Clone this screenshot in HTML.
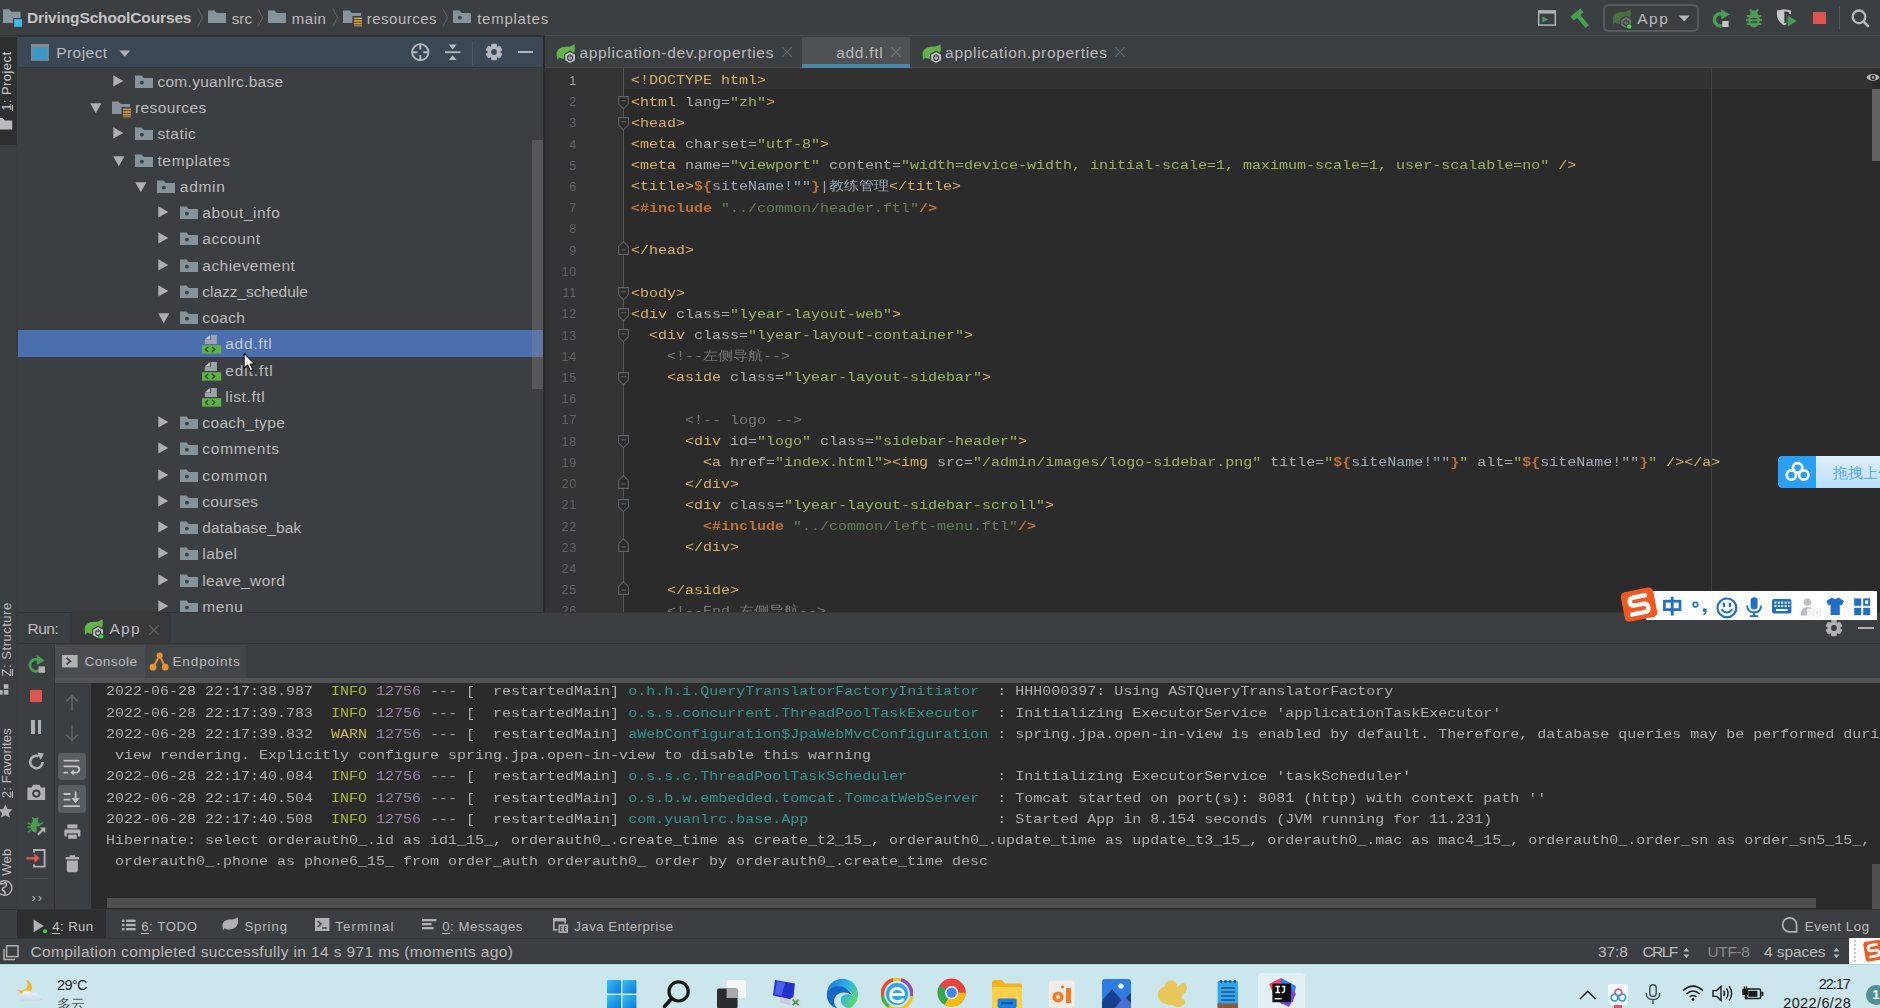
<!DOCTYPE html>
<html><head><meta charset="utf-8"><title>IDE</title>
<style>
html,body{margin:0;padding:0;}
body{width:1880px;height:1008px;overflow:hidden;position:relative;background:#3c3f41;font-family:"Liberation Sans",sans-serif;color:#bbbbbb;}
body div,body svg,body span.t{position:absolute;}
span.t{white-space:pre;}
.cl{left:631.3px;opacity:.9;height:21px;white-space:pre;font-family:"Liberation Mono",monospace;font-size:13px;line-height:21px;color:#a9b7c6;transform:scaleX(1.1538);transform-origin:0 0;}
.co{left:105.8px;opacity:.9;height:21px;white-space:pre;font-family:"Liberation Mono",monospace;font-size:13px;line-height:21px;color:#bbbbbb;transform:scaleX(1.1538);transform-origin:0 0;}
.ln{left:544.2px;width:33px;text-align:right;font-size:12.5px;line-height:14px;height:14px;color:#606366;letter-spacing:0.9px;}
.g{color:#e8bf6a}.a{color:#bababa}.v{color:#a5c261}.c{color:#808080}.k{color:#cc7832;font-weight:bold}.o{color:#cc7832;font-weight:bold}.s{color:#6a8759}.p{color:#a9b7c6}
.i{color:#b6c535}.w{color:#d8c548}.m{color:#a38bb4}.l{color:#2fa19c}
</style></head>
<body>
<div style="left:0px;top:0px;width:1880px;height:36px;background:#3c3f41;"></div>
<div style="left:0px;top:35px;width:545px;height:1.6px;background:#2f3234;"></div>
<div style="left:545px;top:35.4px;width:1335px;height:1.3px;background:#494b4d;"></div>
<svg style="left:3.2px;top:9px;" width="20" height="19" viewBox="0 0 20 19"><path d="M0,0.3 H6.2 L8.2,2.7 H17.5 V14 H0 Z" fill="#8a969d"/><rect x="10.1" y="9" width="10" height="10" fill="#3c3f41"/><rect x="11.2" y="10.1" width="7.9" height="7.7" fill="#3dbae6"/></svg>
<span class="t" style="left:27px;top:10.08px;font-size:15.5px;line-height:15.5px;letter-spacing:-0.137px;font-weight:700;color:#c4c4c4;">DrivingSchoolCourses</span>
<svg style="left:196.5px;top:8px;" width="7" height="19" viewBox="0 0 7 19"><path d="M0.8,0.5 L5.6,9.5 L0.8,18.5" stroke="#5c6062" stroke-width="1.1" fill="none"/></svg>
<svg style="left:207.7px;top:9.8px;" width="20" height="17" viewBox="0 0 20 17"><path d="M0,0.6 H6.6 L8.6,3 H18 V13 H0 Z" fill="#87939a"/></svg>
<span class="t" style="left:231.7px;top:10.50px;font-size:15px;line-height:15px;letter-spacing:0.100px;">src</span>
<svg style="left:256.5px;top:8px;" width="7" height="19" viewBox="0 0 7 19"><path d="M0.8,0.5 L5.6,9.5 L0.8,18.5" stroke="#5c6062" stroke-width="1.1" fill="none"/></svg>
<svg style="left:267.9px;top:9.8px;" width="20" height="17" viewBox="0 0 20 17"><path d="M0,0.6 H6.6 L8.6,3 H18 V13 H0 Z" fill="#87939a"/></svg>
<span class="t" style="left:291.7px;top:10.50px;font-size:15px;line-height:15px;letter-spacing:0.561px;">main</span>
<svg style="left:331.8px;top:8px;" width="7" height="19" viewBox="0 0 7 19"><path d="M0.8,0.5 L5.6,9.5 L0.8,18.5" stroke="#5c6062" stroke-width="1.1" fill="none"/></svg>
<svg style="left:342.8px;top:9.8px;" width="20" height="17" viewBox="0 0 20 17"><path d="M0,0.6 H6.6 L8.6,3 H18 V13 H0 Z" fill="#87939a"/><rect x="9.5" y="6" width="9.5" height="10" fill="#3c3f41"/><rect x="11" y="7.6" width="8" height="1.6" fill="#d9a343"/><rect x="11" y="10.2" width="8" height="1.6" fill="#d9a343"/><rect x="11" y="12.8" width="8" height="1.6" fill="#d9a343"/><rect x="11" y="15.2" width="8" height="1.2" fill="#b8893a"/></svg>
<span class="t" style="left:366.8px;top:10.50px;font-size:15px;line-height:15px;letter-spacing:0.493px;">resources</span>
<svg style="left:441.8px;top:8px;" width="7" height="19" viewBox="0 0 7 19"><path d="M0.8,0.5 L5.6,9.5 L0.8,18.5" stroke="#5c6062" stroke-width="1.1" fill="none"/></svg>
<svg style="left:453px;top:9.8px;" width="20" height="17" viewBox="0 0 20 17"><path d="M0,0.6 H6.6 L8.6,3 H18 V13 H0 Z" fill="#87939a"/><circle cx="6.9" cy="7.6" r="1.9" fill="#3c3f41"/></svg>
<span class="t" style="left:477.2px;top:10.50px;font-size:15px;line-height:15px;letter-spacing:0.744px;">templates</span>
<svg style="left:1537px;top:10px;" width="20" height="17" viewBox="0 0 20 17"><rect x="1.7" y="1.1" width="16.6" height="14" fill="none" stroke="#afb1b3" stroke-width="1.5"/><rect x="1" y="0.4" width="18" height="3.2" fill="#afb1b3"/><path d="M5.2,6.4 L11.2,9.6 L5.2,12.8 Z" fill="#499c54"/></svg>
<svg style="left:1567.8px;top:6.6px;" width="23" height="22" viewBox="0 0 23 22"><g transform="translate(11.4,10.2) rotate(-40)" fill="#499c54"><rect x="-6.4" y="-6.2" width="12.8" height="5.2" rx="0.5"/><rect x="-2.2" y="-2" width="4.4" height="14.2"/></g></svg>
<div style="left:1603.4px;top:3.6px;width:92px;height:24px;border:2px solid #57595b;border-radius:5.5px;box-sizing:content-box"></div>
<svg style="left:1611.8px;top:8.6px;" width="21.0" height="21.0" viewBox="0 0 21 21"><g opacity="0.4"><path d="M0.9,12.6 C-0.8,6.6 4,2.4 10.4,2.8 C13.8,3 16.4,1.9 18.3,0 C19.5,5.4 18.7,10.2 15.2,12.9 C11.6,15.6 6,15.4 3.2,13.6 L1.3,15.9 Z" fill="#62b34a"/><path d="M14.1,6.6 L20.1,10.1 V17 L14.1,20.4 L8.1,17 V10.1 Z" fill="#3c3f41"/><path d="M14.1,7.9 L19,10.7 V16.3 L14.1,19.1 L9.2,16.3 V10.7 Z" fill="#c0c2c4"/><circle cx="14.1" cy="13.8" r="2.5" fill="none" stroke="#3c3f41" stroke-width="1.2"/><rect x="13.1" y="9.6" width="2" height="3" fill="#c0c2c4"/><rect x="13.55" y="10" width="1.1" height="3.4" fill="#3c3f41"/></g><circle cx="17.2" cy="17.4" r="2.9" fill="#3c3f41"/><circle cx="17.2" cy="17.4" r="2.2" fill="#2fe02f"/></svg>
<span class="t" style="left:1637.2px;top:11.08px;font-size:15.5px;line-height:15.5px;letter-spacing:1.503px;">App</span>
<svg style="left:1678px;top:15px;" width="13" height="8" viewBox="0 0 13 8"><path d="M0.6,0.6 H11.6 L6.1,6.6 Z" fill="#b4b6b8"/></svg>
<svg style="left:1711px;top:8px;" width="22" height="21" viewBox="0 0 22 21"><path d="M13,6.8 A6.1,6.1 0 1 0 13.6,16.4" stroke="#499c54" stroke-width="3.6" fill="none"/><path d="M10.2,1.2 L18.8,6.6 L10.2,11.6 Z" fill="#499c54"/><rect x="10.6" y="12.4" width="7.6" height="7.4" fill="#3c3f41"/><rect x="11.3" y="13" width="6.3" height="6" fill="#c4c6c8"/></svg>
<svg style="left:1744px;top:8px;" width="20" height="20" viewBox="0 0 20 20"><g stroke="#499c54" stroke-width="2.1" fill="none"><path d="M2.6,8 H17.4 M2,12 H18 M2.6,16 H17.4 M6,1.4 L8.6,4.6 M14,1.4 L11.4,4.6"/></g><g fill="#499c54"><ellipse cx="10" cy="12" rx="5.7" ry="7.4"/><circle cx="10" cy="6" r="3.8"/></g><g stroke="#3c3f41" stroke-width="1.3"><path d="M7,10.6 H13 M7,14 H13"/></g></svg>
<svg style="left:1776px;top:9px;" width="22" height="20" viewBox="0 0 22 20"><path d="M1,1.6 L8,0.2 L15,1.6 V5 H10.6 V15 L8,16.4 C3.6,13.6 1,10 1,5.8 Z" fill="#c4c6c8"/><path d="M8.4,2.2 L13.2,3.2 V5 H10.6 V13.6 L8.4,14.2 Z" fill="#34373a"/><path d="M11.8,6.6 L20.8,12 L11.8,17.6 Z" fill="#499c54"/></svg>
<div style="left:1813px;top:12px;width:12.6px;height:12.2px;background:#db5651;"></div>
<div style="left:1839px;top:6px;width:1px;height:23px;background:#55585a;"></div>
<svg style="left:1850px;top:9px;" width="21" height="20" viewBox="0 0 21 20"><circle cx="9" cy="7.8" r="6.3" fill="none" stroke="#b4b6b8" stroke-width="2.3"/><path d="M13.4,12.4 L18,17" stroke="#b4b6b8" stroke-width="2.6" stroke-linecap="round"/></svg>
<div style="left:0px;top:36px;width:18px;height:902px;background:#3c3f41;"></div>
<div style="left:15.8px;top:145px;width:3px;height:793px;background:#393c3e;"></div>
<div style="left:0px;top:36.5px;width:16.8px;height:108.5px;background:#2d2f30;"></div>
<span class="t" style="left:0px;top:-0.00px;font-size:13px;line-height:13px;letter-spacing:0.431px;color:#c8c8c8;transform-origin:0 0;transform:translate(0.3px,110.8px) rotate(-90deg);">1: Project</span>
<div style="left:12.3px;top:104.6px;width:1.1px;height:6.6px;background:#c8c8c8;"></div>
<svg style="left:0px;top:117px;" width="13" height="13" viewBox="0 0 13 13"><path d="M-6,1 H2.6 L4.8,3.6 H12.2 V12.6 H-6 Z" fill="#b9bcbe"/></svg>
<div style="left:18px;top:36.6px;width:525.7px;height:30.4px;background:#3b4754;"></div>
<div style="left:18px;top:67px;width:525px;height:1px;background:#35393d;"></div>
<svg style="left:31px;top:44.2px;" width="19" height="17" viewBox="0 0 19 17"><rect x="0.7" y="0.7" width="16.5" height="15.4" fill="#3a98c8" stroke="#7f8b91" stroke-width="1.4"/><rect x="0" y="0" width="17.9" height="3.4" fill="#7f8b91"/></svg>
<span class="t" style="left:56.2px;top:45.28px;font-size:15.5px;line-height:15.5px;letter-spacing:0.458px;">Project</span>
<svg style="left:118.5px;top:49.5px;" width="12" height="8" viewBox="0 0 12 8"><path d="M0.4,0.4 H11.2 L5.8,6.8 Z" fill="#afb1b3"/></svg>
<svg style="left:410px;top:42px;" width="21" height="21" viewBox="0 0 21 21"><circle cx="10.3" cy="10.2" r="8.1" fill="none" stroke="#b2b7bc" stroke-width="1.9"/><path d="M10.3,1.5 V7.4 M10.3,13 V19 M1.5,10.2 H7.4 M13.2,10.2 H19" stroke="#b2b7bc" stroke-width="2"/></svg>
<svg style="left:443.5px;top:43px;" width="18" height="19" viewBox="0 0 18 19"><path d="M1,9.2 H16.4" stroke="#b2b7bc" stroke-width="1.9"/><path d="M4.8,1.6 H12.6 L8.7,6.4 Z M4.8,17 H12.6 L8.7,12.2 Z" fill="#b2b7bc"/></svg>
<div style="left:472px;top:41px;width:1px;height:24px;background:#4a5866;"></div>
<svg style="left:483.6px;top:42px;" width="20" height="20" viewBox="0 0 20 20"><g transform="translate(10,10)"><path d="M-2.5,-8.3 H2.5 L3.1,-4.700000000000001 H-3.1 Z" transform="rotate(0)" fill="#b2b7bc"/><path d="M-2.5,-8.3 H2.5 L3.1,-4.700000000000001 H-3.1 Z" transform="rotate(60)" fill="#b2b7bc"/><path d="M-2.5,-8.3 H2.5 L3.1,-4.700000000000001 H-3.1 Z" transform="rotate(120)" fill="#b2b7bc"/><path d="M-2.5,-8.3 H2.5 L3.1,-4.700000000000001 H-3.1 Z" transform="rotate(180)" fill="#b2b7bc"/><path d="M-2.5,-8.3 H2.5 L3.1,-4.700000000000001 H-3.1 Z" transform="rotate(240)" fill="#b2b7bc"/><path d="M-2.5,-8.3 H2.5 L3.1,-4.700000000000001 H-3.1 Z" transform="rotate(300)" fill="#b2b7bc"/><circle r="6.1000000000000005" fill="#b2b7bc"/><circle r="2.9" fill="#3b4754"/></g></svg>
<div style="left:518.3px;top:51px;width:15.2px;height:2px;background:#b2b7bc;"></div>
<div style="left:543px;top:36px;width:2px;height:577px;background:#2b2b2b;"></div>
<div style="left:545px;top:36px;width:1335px;height:32px;background:#3c3f41;"></div>
<div style="left:545px;top:67px;width:1335px;height:1px;background:#4a4c4e;"></div>
<svg style="left:555.6px;top:44.3px;" width="21.0" height="21.0" viewBox="0 0 21 21"><g opacity="1"><path d="M0.9,12.6 C-0.8,6.6 4,2.4 10.4,2.8 C13.8,3 16.4,1.9 18.3,0 C19.5,5.4 18.7,10.2 15.2,12.9 C11.6,15.6 6,15.4 3.2,13.6 L1.3,15.9 Z" fill="#62b34a"/><path d="M14.1,6.6 L20.1,10.1 V17 L14.1,20.4 L8.1,17 V10.1 Z" fill="#3c3f41"/><path d="M14.1,7.9 L19,10.7 V16.3 L14.1,19.1 L9.2,16.3 V10.7 Z" fill="#c0c2c4"/><circle cx="14.1" cy="13.8" r="2.5" fill="none" stroke="#3c3f41" stroke-width="1.2"/><rect x="13.1" y="9.6" width="2" height="3" fill="#c0c2c4"/><rect x="13.55" y="10" width="1.1" height="3.4" fill="#3c3f41"/></g></svg>
<span class="t" style="left:579.4px;top:44.58px;font-size:15.5px;line-height:15.5px;letter-spacing:0.706px;">application-dev.properties</span>
<svg style="left:780.8px;top:46.3px;" width="12" height="12" viewBox="0 0 12 12"><path d="M1.4000000000000004,1.4000000000000004 L10.6,10.6 M10.6,1.4000000000000004 L1.4000000000000004,10.6" stroke="#64686a" stroke-width="1.3" fill="none"/></svg>
<div style="left:802px;top:36.8px;width:108.2px;height:30.7px;background:#4e5254;"></div>
<div style="left:802px;top:64px;width:108.2px;height:4px;background:#4a88a5;"></div>
<span class="t" style="left:836.2px;top:44.58px;font-size:15.5px;line-height:15.5px;letter-spacing:0.694px;">add.ftl</span>
<svg style="left:889.7px;top:46.3px;" width="12" height="12" viewBox="0 0 12 12"><path d="M1.4000000000000004,1.4000000000000004 L10.6,10.6 M10.6,1.4000000000000004 L1.4000000000000004,10.6" stroke="#74787a" stroke-width="1.3" fill="none"/></svg>
<svg style="left:921.6px;top:44.3px;" width="21.0" height="21.0" viewBox="0 0 21 21"><g opacity="1"><path d="M0.9,12.6 C-0.8,6.6 4,2.4 10.4,2.8 C13.8,3 16.4,1.9 18.3,0 C19.5,5.4 18.7,10.2 15.2,12.9 C11.6,15.6 6,15.4 3.2,13.6 L1.3,15.9 Z" fill="#62b34a"/><path d="M14.1,6.6 L20.1,10.1 V17 L14.1,20.4 L8.1,17 V10.1 Z" fill="#3c3f41"/><path d="M14.1,7.9 L19,10.7 V16.3 L14.1,19.1 L9.2,16.3 V10.7 Z" fill="#c0c2c4"/><circle cx="14.1" cy="13.8" r="2.5" fill="none" stroke="#3c3f41" stroke-width="1.2"/><rect x="13.1" y="9.6" width="2" height="3" fill="#c0c2c4"/><rect x="13.55" y="10" width="1.1" height="3.4" fill="#3c3f41"/></g></svg>
<span class="t" style="left:945.1px;top:44.58px;font-size:15.5px;line-height:15.5px;letter-spacing:0.688px;">application.properties</span>
<svg style="left:1113.6px;top:46.3px;" width="12" height="12" viewBox="0 0 12 12"><path d="M1.4000000000000004,1.4000000000000004 L10.6,10.6 M10.6,1.4000000000000004 L1.4000000000000004,10.6" stroke="#64686a" stroke-width="1.3" fill="none"/></svg>
<div style="left:18px;top:68px;width:525px;height:544.5px;background:#3c3f41;"></div>
<div style="left:18px;top:330px;width:525px;height:27px;background:#4b6eaf;"></div>
<svg style="left:113.2px;top:75.10000000000001px;" width="11" height="12" viewBox="0 0 11 12"><path d="M0.3,0.2 L10.3,5.9 L0.3,11.6 Z" fill="#adafb1"/></svg>
<svg style="left:134.8px;top:74.9px;" width="20" height="17" viewBox="0 0 20 17"><path d="M0,0.6 H6.6 L8.6,3 H18 V13 H0 Z" fill="#87939a"/><circle cx="6.9" cy="7.6" r="1.9" fill="#3c3f41"/></svg>
<span class="t" style="left:157.4px;top:73.58px;font-size:15.5px;line-height:15.5px;letter-spacing:0.288px;">com.yuanlrc.base</span>
<svg style="left:90.35px;top:103.10000000000001px;" width="12" height="11" viewBox="0 0 12 11"><path d="M0.2,0.3 L11.4,0.3 L5.8,10.3 Z" fill="#adafb1"/></svg>
<svg style="left:112.35px;top:100.9px;" width="20" height="17" viewBox="0 0 20 17"><path d="M0,0.6 H6.6 L8.6,3 H18 V13 H0 Z" fill="#87939a"/><rect x="9.5" y="6" width="9.5" height="10" fill="#3c3f41"/><rect x="11" y="7.6" width="8" height="1.6" fill="#d9a343"/><rect x="11" y="10.2" width="8" height="1.6" fill="#d9a343"/><rect x="11" y="12.8" width="8" height="1.6" fill="#d9a343"/><rect x="11" y="15.2" width="8" height="1.2" fill="#b8893a"/></svg>
<span class="t" style="left:134.95px;top:99.58px;font-size:15.5px;line-height:15.5px;letter-spacing:0.398px;">resources</span>
<svg style="left:113.2px;top:127.1px;" width="11" height="12" viewBox="0 0 11 12"><path d="M0.3,0.2 L10.3,5.9 L0.3,11.6 Z" fill="#adafb1"/></svg>
<svg style="left:134.8px;top:126.89999999999999px;" width="20" height="17" viewBox="0 0 20 17"><path d="M0,0.6 H6.6 L8.6,3 H18 V13 H0 Z" fill="#87939a"/><circle cx="6.9" cy="7.6" r="1.9" fill="#3c3f41"/></svg>
<span class="t" style="left:157.4px;top:125.58px;font-size:15.5px;line-height:15.5px;letter-spacing:0.443px;">static</span>
<svg style="left:112.8px;top:156.1px;" width="12" height="11" viewBox="0 0 12 11"><path d="M0.2,0.3 L11.4,0.3 L5.8,10.3 Z" fill="#adafb1"/></svg>
<svg style="left:134.8px;top:153.89999999999998px;" width="20" height="17" viewBox="0 0 20 17"><path d="M0,0.6 H6.6 L8.6,3 H18 V13 H0 Z" fill="#87939a"/><circle cx="6.9" cy="7.6" r="1.9" fill="#3c3f41"/></svg>
<span class="t" style="left:157.4px;top:152.58px;font-size:15.5px;line-height:15.5px;letter-spacing:0.662px;">templates</span>
<svg style="left:135.25px;top:182.1px;" width="12" height="11" viewBox="0 0 12 11"><path d="M0.2,0.3 L11.4,0.3 L5.8,10.3 Z" fill="#adafb1"/></svg>
<svg style="left:157.25px;top:179.89999999999998px;" width="20" height="17" viewBox="0 0 20 17"><path d="M0,0.6 H6.6 L8.6,3 H18 V13 H0 Z" fill="#87939a"/><circle cx="6.9" cy="7.6" r="1.9" fill="#3c3f41"/></svg>
<span class="t" style="left:179.85px;top:178.58px;font-size:15.5px;line-height:15.5px;letter-spacing:0.683px;">admin</span>
<svg style="left:158.09999999999997px;top:206.1px;" width="11" height="12" viewBox="0 0 11 12"><path d="M0.3,0.2 L10.3,5.9 L0.3,11.6 Z" fill="#adafb1"/></svg>
<svg style="left:179.7px;top:205.89999999999998px;" width="20" height="17" viewBox="0 0 20 17"><path d="M0,0.6 H6.6 L8.6,3 H18 V13 H0 Z" fill="#87939a"/><circle cx="6.9" cy="7.6" r="1.9" fill="#3c3f41"/></svg>
<span class="t" style="left:202.29999999999998px;top:204.58px;font-size:15.5px;line-height:15.5px;letter-spacing:0.566px;">about_info</span>
<svg style="left:158.09999999999997px;top:232.1px;" width="11" height="12" viewBox="0 0 11 12"><path d="M0.3,0.2 L10.3,5.9 L0.3,11.6 Z" fill="#adafb1"/></svg>
<svg style="left:179.7px;top:231.89999999999998px;" width="20" height="17" viewBox="0 0 20 17"><path d="M0,0.6 H6.6 L8.6,3 H18 V13 H0 Z" fill="#87939a"/><circle cx="6.9" cy="7.6" r="1.9" fill="#3c3f41"/></svg>
<span class="t" style="left:202.29999999999998px;top:230.58px;font-size:15.5px;line-height:15.5px;letter-spacing:0.567px;">account</span>
<svg style="left:158.09999999999997px;top:259.09999999999997px;" width="11" height="12" viewBox="0 0 11 12"><path d="M0.3,0.2 L10.3,5.9 L0.3,11.6 Z" fill="#adafb1"/></svg>
<svg style="left:179.7px;top:258.9px;" width="20" height="17" viewBox="0 0 20 17"><path d="M0,0.6 H6.6 L8.6,3 H18 V13 H0 Z" fill="#87939a"/><circle cx="6.9" cy="7.6" r="1.9" fill="#3c3f41"/></svg>
<span class="t" style="left:202.29999999999998px;top:257.58px;font-size:15.5px;line-height:15.5px;letter-spacing:0.461px;">achievement</span>
<svg style="left:158.09999999999997px;top:285.09999999999997px;" width="11" height="12" viewBox="0 0 11 12"><path d="M0.3,0.2 L10.3,5.9 L0.3,11.6 Z" fill="#adafb1"/></svg>
<svg style="left:179.7px;top:284.9px;" width="20" height="17" viewBox="0 0 20 17"><path d="M0,0.6 H6.6 L8.6,3 H18 V13 H0 Z" fill="#87939a"/><circle cx="6.9" cy="7.6" r="1.9" fill="#3c3f41"/></svg>
<span class="t" style="left:202.29999999999998px;top:283.58px;font-size:15.5px;line-height:15.5px;letter-spacing:-0.037px;">clazz_schedule</span>
<svg style="left:157.7px;top:313.09999999999997px;" width="12" height="11" viewBox="0 0 12 11"><path d="M0.2,0.3 L11.4,0.3 L5.8,10.3 Z" fill="#adafb1"/></svg>
<svg style="left:179.7px;top:310.9px;" width="20" height="17" viewBox="0 0 20 17"><path d="M0,0.6 H6.6 L8.6,3 H18 V13 H0 Z" fill="#87939a"/><circle cx="6.9" cy="7.6" r="1.9" fill="#3c3f41"/></svg>
<span class="t" style="left:202.29999999999998px;top:309.58px;font-size:15.5px;line-height:15.5px;letter-spacing:0.331px;">coach</span>
<svg style="left:202.1px;top:334.7px;" width="20" height="19" viewBox="0 0 20 19"><path d="M8.9,0 H14.9 V8.9 H2.8 V5.1 H8.9 Z" fill="#9aa4aa"/><path d="M7.9,0 V4.5 H2.8 Z" fill="#c3c9cd"/><rect x="0" y="10.2" width="19.2" height="8.4" fill="#62b147"/><path d="M6.3,11.8 L3.4,14.4 L6.3,17 M9.8,11.8 L12.7,14.4 L9.8,17" stroke="#27561f" stroke-width="1.4" fill="none"/></svg>
<span class="t" style="left:225.25px;top:335.58px;font-size:15.5px;line-height:15.5px;letter-spacing:0.719px;color:#c3c9d6;">add.ftl</span>
<svg style="left:202.1px;top:361.7px;" width="20" height="19" viewBox="0 0 20 19"><path d="M8.9,0 H14.9 V8.9 H2.8 V5.1 H8.9 Z" fill="#9aa4aa"/><path d="M7.9,0 V4.5 H2.8 Z" fill="#c3c9cd"/><rect x="0" y="10.2" width="19.2" height="8.4" fill="#62b147"/><path d="M6.3,11.8 L3.4,14.4 L6.3,17 M9.8,11.8 L12.7,14.4 L9.8,17" stroke="#27561f" stroke-width="1.4" fill="none"/></svg>
<span class="t" style="left:225.25px;top:362.58px;font-size:15.5px;line-height:15.5px;letter-spacing:0.884px;">edit.ftl</span>
<svg style="left:202.1px;top:387.7px;" width="20" height="19" viewBox="0 0 20 19"><path d="M8.9,0 H14.9 V8.9 H2.8 V5.1 H8.9 Z" fill="#9aa4aa"/><path d="M7.9,0 V4.5 H2.8 Z" fill="#c3c9cd"/><rect x="0" y="10.2" width="19.2" height="8.4" fill="#62b147"/><path d="M6.3,11.8 L3.4,14.4 L6.3,17 M9.8,11.8 L12.7,14.4 L9.8,17" stroke="#27561f" stroke-width="1.4" fill="none"/></svg>
<span class="t" style="left:225.25px;top:388.58px;font-size:15.5px;line-height:15.5px;letter-spacing:0.577px;">list.ftl</span>
<svg style="left:158.09999999999997px;top:416.09999999999997px;" width="11" height="12" viewBox="0 0 11 12"><path d="M0.3,0.2 L10.3,5.9 L0.3,11.6 Z" fill="#adafb1"/></svg>
<svg style="left:179.7px;top:415.9px;" width="20" height="17" viewBox="0 0 20 17"><path d="M0,0.6 H6.6 L8.6,3 H18 V13 H0 Z" fill="#87939a"/><circle cx="6.9" cy="7.6" r="1.9" fill="#3c3f41"/></svg>
<span class="t" style="left:202.29999999999998px;top:414.58px;font-size:15.5px;line-height:15.5px;letter-spacing:0.358px;">coach_type</span>
<svg style="left:158.09999999999997px;top:442.09999999999997px;" width="11" height="12" viewBox="0 0 11 12"><path d="M0.3,0.2 L10.3,5.9 L0.3,11.6 Z" fill="#adafb1"/></svg>
<svg style="left:179.7px;top:441.9px;" width="20" height="17" viewBox="0 0 20 17"><path d="M0,0.6 H6.6 L8.6,3 H18 V13 H0 Z" fill="#87939a"/><circle cx="6.9" cy="7.6" r="1.9" fill="#3c3f41"/></svg>
<span class="t" style="left:202.29999999999998px;top:440.58px;font-size:15.5px;line-height:15.5px;letter-spacing:0.743px;">comments</span>
<svg style="left:158.09999999999997px;top:469.09999999999997px;" width="11" height="12" viewBox="0 0 11 12"><path d="M0.3,0.2 L10.3,5.9 L0.3,11.6 Z" fill="#adafb1"/></svg>
<svg style="left:179.7px;top:468.9px;" width="20" height="17" viewBox="0 0 20 17"><path d="M0,0.6 H6.6 L8.6,3 H18 V13 H0 Z" fill="#87939a"/><circle cx="6.9" cy="7.6" r="1.9" fill="#3c3f41"/></svg>
<span class="t" style="left:202.29999999999998px;top:467.58px;font-size:15.5px;line-height:15.5px;letter-spacing:1.053px;">common</span>
<svg style="left:158.09999999999997px;top:495.09999999999997px;" width="11" height="12" viewBox="0 0 11 12"><path d="M0.3,0.2 L10.3,5.9 L0.3,11.6 Z" fill="#adafb1"/></svg>
<svg style="left:179.7px;top:494.9px;" width="20" height="17" viewBox="0 0 20 17"><path d="M0,0.6 H6.6 L8.6,3 H18 V13 H0 Z" fill="#87939a"/><circle cx="6.9" cy="7.6" r="1.9" fill="#3c3f41"/></svg>
<span class="t" style="left:202.29999999999998px;top:493.58px;font-size:15.5px;line-height:15.5px;letter-spacing:0.236px;">courses</span>
<svg style="left:158.09999999999997px;top:521.1px;" width="11" height="12" viewBox="0 0 11 12"><path d="M0.3,0.2 L10.3,5.9 L0.3,11.6 Z" fill="#adafb1"/></svg>
<svg style="left:179.7px;top:520.9000000000001px;" width="20" height="17" viewBox="0 0 20 17"><path d="M0,0.6 H6.6 L8.6,3 H18 V13 H0 Z" fill="#87939a"/><circle cx="6.9" cy="7.6" r="1.9" fill="#3c3f41"/></svg>
<span class="t" style="left:202.29999999999998px;top:519.58px;font-size:15.5px;line-height:15.5px;letter-spacing:0.137px;">database_bak</span>
<svg style="left:158.09999999999997px;top:547.1px;" width="11" height="12" viewBox="0 0 11 12"><path d="M0.3,0.2 L10.3,5.9 L0.3,11.6 Z" fill="#adafb1"/></svg>
<svg style="left:179.7px;top:546.9000000000001px;" width="20" height="17" viewBox="0 0 20 17"><path d="M0,0.6 H6.6 L8.6,3 H18 V13 H0 Z" fill="#87939a"/><circle cx="6.9" cy="7.6" r="1.9" fill="#3c3f41"/></svg>
<span class="t" style="left:202.29999999999998px;top:545.58px;font-size:15.5px;line-height:15.5px;letter-spacing:0.488px;">label</span>
<svg style="left:158.09999999999997px;top:574.1px;" width="11" height="12" viewBox="0 0 11 12"><path d="M0.3,0.2 L10.3,5.9 L0.3,11.6 Z" fill="#adafb1"/></svg>
<svg style="left:179.7px;top:573.9000000000001px;" width="20" height="17" viewBox="0 0 20 17"><path d="M0,0.6 H6.6 L8.6,3 H18 V13 H0 Z" fill="#87939a"/><circle cx="6.9" cy="7.6" r="1.9" fill="#3c3f41"/></svg>
<span class="t" style="left:202.29999999999998px;top:572.58px;font-size:15.5px;line-height:15.5px;letter-spacing:0.358px;">leave_word</span>
<svg style="left:158.09999999999997px;top:600.1px;" width="11" height="12" viewBox="0 0 11 12"><path d="M0.3,0.2 L10.3,5.9 L0.3,11.6 Z" fill="#adafb1"/></svg>
<svg style="left:179.7px;top:599.9000000000001px;" width="20" height="17" viewBox="0 0 20 17"><path d="M0,0.6 H6.6 L8.6,3 H18 V13 H0 Z" fill="#87939a"/><circle cx="6.9" cy="7.6" r="1.9" fill="#3c3f41"/></svg>
<span class="t" style="left:202.29999999999998px;top:598.58px;font-size:15.5px;line-height:15.5px;letter-spacing:0.640px;">menu</span>
<div style="left:532px;top:140px;width:10.6px;height:248.5px;background:rgba(140,140,140,0.32);"></div>
<div style="left:545px;top:68px;width:1335px;height:544.5px;background:#2b2b2b;"></div>
<div style="left:545px;top:68px;width:78.5px;height:544.5px;background:#313335;"></div>
<div style="left:623.5px;top:68px;width:1248px;height:21.2px;background:#323232;"></div>
<div style="left:1711px;top:68px;width:1px;height:544.5px;background:#3f4142;"></div>
<div style="left:623px;top:68px;width:1px;height:544.5px;background:#555759;"></div>
<div class="ln" style="top:73.90px;color:#a4a3a3">1</div>
<div class="cl" style="top:70.33px"><span class="g">&lt;!DOCTYPE html&gt;</span></div>
<div class="ln" style="top:95.12px">2</div>
<div class="cl" style="top:91.55px"><span class="g">&lt;html</span><span class="a"> la</span><span class="a">ng=</span><span class="v">"zh"</span><span class="g">&gt;</span></div>
<svg style="left:618px;top:95.72px;" width="11" height="14" viewBox="0 0 11 14"><path d="M0.6,0.6 H10.4 V7.8 L5.5,12.8 L0.6,7.8 Z" fill="#2b2b2b" stroke="#606366" stroke-width="1.1"/><path d="M3.2,4.8 H7.8" stroke="#606366" stroke-width="1.1"/></svg>
<div class="ln" style="top:116.34px">3</div>
<div class="cl" style="top:112.77px"><span class="g">&lt;head</span><span class="g">&gt;</span></div>
<svg style="left:618px;top:116.94px;" width="11" height="14" viewBox="0 0 11 14"><path d="M0.6,0.6 H10.4 V7.8 L5.5,12.8 L0.6,7.8 Z" fill="#2b2b2b" stroke="#606366" stroke-width="1.1"/><path d="M3.2,4.8 H7.8" stroke="#606366" stroke-width="1.1"/></svg>
<div class="ln" style="top:137.56px">4</div>
<div class="cl" style="top:133.99px"><span class="g">&lt;meta</span><span class="a"> ch</span><span class="a">arset=</span><span class="v">"utf-8"</span><span class="g">&gt;</span></div>
<div class="ln" style="top:158.78px">5</div>
<div class="cl" style="top:155.21px"><span class="g">&lt;meta</span><span class="a"> na</span><span class="a">me=</span><span class="v">"viewport"</span><span class="a"> co</span><span class="a">ntent=</span><span class="v">"width=device-width, initial-scale=1, maximum-scale=1, user-scalable=no"</span><span class="g"> /&gt;</span></div>
<div class="ln" style="top:180.00px">6</div>
<div class="cl" style="top:176.43px"><span class="g">&lt;title&gt;</span><span class="o">${</span><span class="p">siteName!""</span><span class="o">}</span><span class="p">|</span><span class="p" style="display:inline-block;width:52px;height:21px;overflow:hidden;vertical-align:top">教练管理</span><span class="g">&lt;/title&gt;</span></div>
<div class="ln" style="top:201.22px">7</div>
<div class="cl" style="top:197.65px"><span class="k">&lt;#include</span><span class="s"> "../common/header.ftl"</span><span class="k">/&gt;</span></div>
<div class="ln" style="top:222.44px">8</div>
<div class="ln" style="top:243.66px">9</div>
<div class="cl" style="top:240.09px"><span class="g">&lt;/head&gt;</span></div>
<svg style="left:618px;top:241.26px;" width="11" height="14" viewBox="0 0 11 14"><path d="M0.6,13.4 H10.4 V5.6 L5.5,0.6 L0.6,5.6 Z" fill="#2b2b2b" stroke="#606366" stroke-width="1.1"/><path d="M3.2,9 H7.8" stroke="#606366" stroke-width="1.1"/></svg>
<div class="ln" style="top:264.88px">10</div>
<div class="ln" style="top:286.10px">11</div>
<div class="cl" style="top:282.53px"><span class="g">&lt;body</span><span class="g">&gt;</span></div>
<svg style="left:618px;top:286.7px;" width="11" height="14" viewBox="0 0 11 14"><path d="M0.6,0.6 H10.4 V7.8 L5.5,12.8 L0.6,7.8 Z" fill="#2b2b2b" stroke="#606366" stroke-width="1.1"/><path d="M3.2,4.8 H7.8" stroke="#606366" stroke-width="1.1"/></svg>
<div class="ln" style="top:307.32px">12</div>
<div class="cl" style="top:303.75px"><span class="g">&lt;div</span><span class="a"> cl</span><span class="a">ass=</span><span class="v">"lyear-layout-web"</span><span class="g">&gt;</span></div>
<svg style="left:618px;top:307.92px;" width="11" height="14" viewBox="0 0 11 14"><path d="M0.6,0.6 H10.4 V7.8 L5.5,12.8 L0.6,7.8 Z" fill="#2b2b2b" stroke="#606366" stroke-width="1.1"/><path d="M3.2,4.8 H7.8" stroke="#606366" stroke-width="1.1"/></svg>
<div class="ln" style="top:328.54px">13</div>
<div class="cl" style="top:324.97px">  <span class="g">&lt;div</span><span class="a"> cl</span><span class="a">ass=</span><span class="v">"lyear-layout-container"</span><span class="g">&gt;</span></div>
<svg style="left:618px;top:329.14px;" width="11" height="14" viewBox="0 0 11 14"><path d="M0.6,0.6 H10.4 V7.8 L5.5,12.8 L0.6,7.8 Z" fill="#2b2b2b" stroke="#606366" stroke-width="1.1"/><path d="M3.2,4.8 H7.8" stroke="#606366" stroke-width="1.1"/></svg>
<div class="ln" style="top:349.76px">14</div>
<div class="cl" style="top:346.19px">    <span class="c">&lt;!--</span><span class="c" style="display:inline-block;width:52px;height:21px;overflow:hidden;vertical-align:top">左侧导航</span><span class="c">--&gt;</span></div>
<div class="ln" style="top:370.98px">15</div>
<div class="cl" style="top:367.41px">    <span class="g">&lt;aside</span><span class="a"> cl</span><span class="a">ass=</span><span class="v">"lyear-layout-sidebar"</span><span class="g">&gt;</span></div>
<svg style="left:618px;top:371.58px;" width="11" height="14" viewBox="0 0 11 14"><path d="M0.6,0.6 H10.4 V7.8 L5.5,12.8 L0.6,7.8 Z" fill="#2b2b2b" stroke="#606366" stroke-width="1.1"/><path d="M3.2,4.8 H7.8" stroke="#606366" stroke-width="1.1"/></svg>
<div class="ln" style="top:392.20px">16</div>
<div class="ln" style="top:413.42px">17</div>
<div class="cl" style="top:409.85px">      <span class="c">&lt;!-- logo --&gt;</span></div>
<div class="ln" style="top:434.64px">18</div>
<div class="cl" style="top:431.07px">      <span class="g">&lt;div</span><span class="a"> id</span><span class="a">=</span><span class="v">"logo"</span><span class="a"> cl</span><span class="a">ass=</span><span class="v">"sidebar-header"</span><span class="g">&gt;</span></div>
<svg style="left:618px;top:435.24px;" width="11" height="14" viewBox="0 0 11 14"><path d="M0.6,0.6 H10.4 V7.8 L5.5,12.8 L0.6,7.8 Z" fill="#2b2b2b" stroke="#606366" stroke-width="1.1"/><path d="M3.2,4.8 H7.8" stroke="#606366" stroke-width="1.1"/></svg>
<div class="ln" style="top:455.86px">19</div>
<div class="cl" style="top:452.29px">        <span class="g">&lt;a</span><span class="a"> hr</span><span class="a">ef=</span><span class="v">"index.html"</span><span class="g">&gt;</span><span class="g">&lt;img</span><span class="a"> sr</span><span class="a">c=</span><span class="v">"/admin/images/logo-sidebar.png"</span><span class="a"> title=</span><span class="v">"</span><span class="o">${</span><span class="p">siteName!""</span><span class="o">}</span><span class="v">"</span><span class="a"> alt=</span><span class="v">"</span><span class="o">${</span><span class="p">siteName!""</span><span class="o">}</span><span class="v">"</span><span class="g"> /&gt;</span><span class="g">&lt;/a&gt;</span></div>
<div class="ln" style="top:477.08px">20</div>
<div class="cl" style="top:473.51px">      <span class="g">&lt;/div&gt;</span></div>
<svg style="left:618px;top:474.68px;" width="11" height="14" viewBox="0 0 11 14"><path d="M0.6,13.4 H10.4 V5.6 L5.5,0.6 L0.6,5.6 Z" fill="#2b2b2b" stroke="#606366" stroke-width="1.1"/><path d="M3.2,9 H7.8" stroke="#606366" stroke-width="1.1"/></svg>
<div class="ln" style="top:498.30px">21</div>
<div class="cl" style="top:494.73px">      <span class="g">&lt;div</span><span class="a"> cl</span><span class="a">ass=</span><span class="v">"lyear-layout-sidebar-scroll"</span><span class="g">&gt;</span></div>
<svg style="left:618px;top:498.9px;" width="11" height="14" viewBox="0 0 11 14"><path d="M0.6,0.6 H10.4 V7.8 L5.5,12.8 L0.6,7.8 Z" fill="#2b2b2b" stroke="#606366" stroke-width="1.1"/><path d="M3.2,4.8 H7.8" stroke="#606366" stroke-width="1.1"/></svg>
<div class="ln" style="top:519.52px">22</div>
<div class="cl" style="top:515.95px">        <span class="k">&lt;#include</span><span class="s"> "../common/left-menu.ftl"</span><span class="k">/&gt;</span></div>
<div class="ln" style="top:540.74px">23</div>
<div class="cl" style="top:537.17px">      <span class="g">&lt;/div&gt;</span></div>
<svg style="left:618px;top:538.34px;" width="11" height="14" viewBox="0 0 11 14"><path d="M0.6,13.4 H10.4 V5.6 L5.5,0.6 L0.6,5.6 Z" fill="#2b2b2b" stroke="#606366" stroke-width="1.1"/><path d="M3.2,9 H7.8" stroke="#606366" stroke-width="1.1"/></svg>
<div class="ln" style="top:561.96px">24</div>
<div class="ln" style="top:583.18px">25</div>
<div class="cl" style="top:579.61px">    <span class="g">&lt;/aside&gt;</span></div>
<svg style="left:618px;top:580.78px;" width="11" height="14" viewBox="0 0 11 14"><path d="M0.6,13.4 H10.4 V5.6 L5.5,0.6 L0.6,5.6 Z" fill="#2b2b2b" stroke="#606366" stroke-width="1.1"/><path d="M3.2,9 H7.8" stroke="#606366" stroke-width="1.1"/></svg>
<div class="ln" style="top:604.40px">26</div>
<div class="cl" style="top:600.83px">    <span class="c">&lt;!--End </span><span class="c" style="display:inline-block;width:52px;height:21px;overflow:hidden;vertical-align:top">左侧导航</span><span class="c">--&gt;</span></div>
<svg style="left:1866px;top:72px;" width="14" height="11" viewBox="0 0 14 11"><path d="M0.5,5.4 C3,1 11,1 13.5,5.4 C11,9.8 3,9.8 0.5,5.4 Z" fill="#b8babc"/><circle cx="7" cy="5.4" r="2.7" fill="#2b2b2b"/><circle cx="7" cy="5.4" r="1.2" fill="#b8babc"/></svg>
<div style="left:1872.4px;top:88.6px;width:7.6px;height:72.4px;background:#606264;"></div>
<div style="left:18px;top:612.5px;width:1862px;height:297px;background:#3c3f41;"></div>
<div style="left:18px;top:612px;width:1862px;height:1px;background:#323435;"></div>
<div style="left:70px;top:613px;width:101px;height:30.5px;background:#37393b;"></div>
<span class="t" style="left:27.4px;top:620.88px;font-size:15.5px;line-height:15.5px;letter-spacing:-0.450px;">Run:</span>
<svg style="left:84.3px;top:619.2px;" width="21.0" height="21.0" viewBox="0 0 21 21"><g opacity="1"><path d="M0.9,12.6 C-0.8,6.6 4,2.4 10.4,2.8 C13.8,3 16.4,1.9 18.3,0 C19.5,5.4 18.7,10.2 15.2,12.9 C11.6,15.6 6,15.4 3.2,13.6 L1.3,15.9 Z" fill="#62b34a"/><path d="M14.1,6.6 L20.1,10.1 V17 L14.1,20.4 L8.1,17 V10.1 Z" fill="#3c3f41"/><path d="M14.1,7.9 L19,10.7 V16.3 L14.1,19.1 L9.2,16.3 V10.7 Z" fill="#c0c2c4"/><circle cx="14.1" cy="13.8" r="2.5" fill="none" stroke="#3c3f41" stroke-width="1.2"/><rect x="13.1" y="9.6" width="2" height="3" fill="#c0c2c4"/><rect x="13.55" y="10" width="1.1" height="3.4" fill="#3c3f41"/></g><circle cx="17.2" cy="17.4" r="2.9" fill="#3c3f41"/><circle cx="17.2" cy="17.4" r="2.2" fill="#2fe02f"/></svg>
<span class="t" style="left:109.4px;top:620.88px;font-size:15.5px;line-height:15.5px;letter-spacing:1.303px;">App</span>
<svg style="left:147.8px;top:623.6px;" width="12" height="12" viewBox="0 0 12 12"><path d="M1.4000000000000004,1.4000000000000004 L10.6,10.6 M10.6,1.4000000000000004 L1.4000000000000004,10.6" stroke="#64686a" stroke-width="1.3" fill="none"/></svg>
<div style="left:18px;top:643px;width:1862px;height:1px;background:#323435;"></div>
<svg style="left:1824.2px;top:618.4px;" width="20" height="20" viewBox="0 0 20 20"><g transform="translate(10,10)"><path d="M-2.5,-8.3 H2.5 L3.1,-4.700000000000001 H-3.1 Z" transform="rotate(0)" fill="#afb1b3"/><path d="M-2.5,-8.3 H2.5 L3.1,-4.700000000000001 H-3.1 Z" transform="rotate(60)" fill="#afb1b3"/><path d="M-2.5,-8.3 H2.5 L3.1,-4.700000000000001 H-3.1 Z" transform="rotate(120)" fill="#afb1b3"/><path d="M-2.5,-8.3 H2.5 L3.1,-4.700000000000001 H-3.1 Z" transform="rotate(180)" fill="#afb1b3"/><path d="M-2.5,-8.3 H2.5 L3.1,-4.700000000000001 H-3.1 Z" transform="rotate(240)" fill="#afb1b3"/><path d="M-2.5,-8.3 H2.5 L3.1,-4.700000000000001 H-3.1 Z" transform="rotate(300)" fill="#afb1b3"/><circle r="6.1000000000000005" fill="#afb1b3"/><circle r="2.9" fill="#3c3f41"/></g></svg>
<div style="left:1858.2px;top:626.6px;width:15.6px;height:2px;background:#afb1b3;"></div>
<div style="left:54px;top:644.5px;width:1px;height:265px;background:#323435;"></div>
<svg style="left:26.8px;top:653.6px;" width="20" height="20" viewBox="0 0 20 20"><path d="M12.4,6.4 A6,6 0 1 0 14,14.4" stroke="#499c54" stroke-width="2.7" fill="none"/><path d="M9.8,1 L17.8,6.4 L9.8,11 Z" fill="#499c54"/><rect x="11.6" y="12.4" width="6.4" height="6.4" fill="#afb1b3"/></svg>
<div style="left:29.8px;top:689.8px;width:12.6px;height:12.6px;background:#db5651;"></div>
<div style="left:31.2px;top:720px;width:3.4px;height:14.4px;background:#afb1b3;"></div>
<div style="left:37.8px;top:720px;width:3.4px;height:14.4px;background:#afb1b3;"></div>
<svg style="left:26.5px;top:751.5px;" width="20" height="20" viewBox="0 0 20 20"><path d="M15.6,10 A6.2,6.2 0 1 1 11.6,4.2" stroke="#afb1b3" stroke-width="2.6" fill="none"/><path d="M10.4,0.4 L17,1.4 L13.6,8 Z" fill="#afb1b3"/></svg>
<svg style="left:27px;top:784px;" width="19" height="17" viewBox="0 0 19 17"><path d="M0.4,3.6 H4.6 L6.2,0.8 H12.4 L14,3.6 H18.2 V16 H0.4 Z" fill="#afb1b3"/><circle cx="9.3" cy="9.6" r="4.1" fill="#3c3f41"/><circle cx="9.3" cy="9.6" r="2.2" fill="#afb1b3"/></svg>
<svg style="left:27px;top:817px;" width="20" height="19" viewBox="0 0 20 19"><g fill="#499c54"><ellipse cx="8.4" cy="9.6" rx="4.8" ry="5.8"/><circle cx="8.4" cy="3.8" r="2.8"/></g><g stroke="#499c54" stroke-width="1.6" fill="none"><path d="M0.8,5.6 L4,7.4 M16,5.6 L12.8,7.4 M0.4,10 H4 M1,15 L4.2,12.8 M5.4,0.4 L6.8,2.2 M11.4,0.4 L10,2.2"/></g><rect x="9.6" y="9.2" width="11" height="10" fill="#3c3f41"/><path d="M11,17.6 L16.6,12" stroke="#afb1b3" stroke-width="2.2"/><path d="M12.6,10.4 H18.4 V16.2 Z" fill="#afb1b3"/></svg>
<svg style="left:26px;top:848.5px;" width="20" height="19" viewBox="0 0 20 19"><path d="M8,3.4 V1 H18.6 V17.6 H8 V15.2" stroke="#afb1b3" stroke-width="1.9" fill="none"/><path d="M0.4,9.3 H10" stroke="#e25a53" stroke-width="2.2"/><path d="M8.4,4.6 L13.6,9.3 L8.4,14 Z" fill="#e25a53"/></svg>
<div style="left:24px;top:878px;width:24px;height:1px;background:#515456;"></div>
<span class="t" style="left:31.5px;top:890.50px;font-size:13px;line-height:13px;letter-spacing:1.828px;color:#afb1b3;">››</span>
<div style="left:55px;top:644.5px;width:1825px;height:33px;background:#3c3f41;"></div>
<div style="left:55px;top:644.5px;width:89.5px;height:33px;background:#4a4d4f;"></div>
<div style="left:144.5px;top:644.5px;width:101px;height:33px;background:#434648;"></div>
<div style="left:55px;top:677.5px;width:1825px;height:5px;background:#515456;"></div>
<svg style="left:62px;top:654.6px;" width="16" height="13" viewBox="0 0 16 13"><rect x="0" y="0" width="15.6" height="12.4" fill="#afb1b3"/><path d="M4.6,3 L8.4,6.2 L4.6,9.4" stroke="#3c3f41" stroke-width="1.7" fill="none"/></svg>
<span class="t" style="left:84.4px;top:654.89px;font-size:13.6px;line-height:13.6px;letter-spacing:0.454px;">Console</span>
<svg style="left:149px;top:651.5px;" width="20" height="19" viewBox="0 0 20 19"><path d="M4.2,15.2 L10.6,3.4 L16.2,15.2" stroke="#e8912d" stroke-width="2" fill="none"/><circle cx="10.6" cy="3.4" r="3" fill="#e8912d"/><circle cx="4" cy="15.2" r="3.4" fill="#e8912d"/><circle cx="16.2" cy="15.2" r="3.4" fill="#e8912d"/></svg>
<span class="t" style="left:172.4px;top:654.89px;font-size:13.6px;line-height:13.6px;letter-spacing:0.866px;">Endpoints</span>
<div style="left:55px;top:682.5px;width:35.5px;height:227px;background:#3c3f41;"></div>
<div style="left:90.5px;top:682.5px;width:1789.5px;height:227px;background:#2b2b2b;"></div>
<svg style="left:65px;top:693.5px;" width="14" height="17" viewBox="0 0 14 17"><path d="M7,16.4 V2 M1.2,7.6 L7,1.6 L12.8,7.6" stroke="#5e6163" stroke-width="1.7" fill="none"/></svg>
<svg style="left:65px;top:724.5px;" width="14" height="17" viewBox="0 0 14 17"><path d="M7,0.6 V15 M1.2,9.4 L7,15.4 L12.8,9.4" stroke="#5e6163" stroke-width="1.7" fill="none"/></svg>
<div style="left:58.3px;top:753.3px;width:27.4px;height:27.2px;background:#5a5d5f;border-radius:4px"></div>
<div style="left:58.3px;top:785.2px;width:27.4px;height:27.4px;background:#5a5d5f;border-radius:4px"></div>
<svg style="left:63px;top:759px;" width="18" height="16" viewBox="0 0 18 16"><path d="M0.6,1.6 H16.4 M0.6,7.4 H13.2 A3.1,3.1 0 0 1 13.2,13.6 H9.6 M0.6,13.6 H5.2" stroke="#c0c2c4" stroke-width="1.8" fill="none"/><path d="M10.8,10.4 L7.2,13.6 L10.8,16.4 Z" fill="#c0c2c4"/></svg>
<svg style="left:63px;top:790.5px;" width="18" height="17" viewBox="0 0 18 17"><path d="M0.6,3 H7.4 M0.6,8.6 H7.4 M0.6,15.2 H17 M12.6,0.4 V9.6" stroke="#c0c2c4" stroke-width="1.8" fill="none"/><path d="M8.4,7 H16.8 L12.6,12.2 Z" fill="#c0c2c4"/></svg>
<svg style="left:64px;top:824px;" width="17" height="16" viewBox="0 0 17 16"><rect x="3.4" y="0.4" width="10" height="4" fill="#afb1b3"/><rect x="0.4" y="5.4" width="16" height="7" rx="1" fill="#afb1b3"/><rect x="3.4" y="10" width="10" height="5.4" fill="#afb1b3" stroke="#3c3f41" stroke-width="1.2"/></svg>
<svg style="left:65px;top:854.5px;" width="15" height="18" viewBox="0 0 15 18"><rect x="0.6" y="2" width="13.4" height="2.4" fill="#afb1b3"/><rect x="4.6" y="0.2" width="5.4" height="2.4" fill="#afb1b3"/><path d="M1.8,5.6 H12.8 V15.6 Q12.8,17.2 11.2,17.2 H3.4 Q1.8,17.2 1.8,15.6 Z" fill="#afb1b3"/></svg>
<div style="left:90.5px;top:682.5px;width:1789.5px;height:215px;overflow:hidden">
<div class="co" style="left:15.4px;top:-1.07px">2022-06-28 22:17:38.987  <span class="i">INFO</span> <span class="m">12756</span> --- [  restartedMain] <span class="l">o.h.h.i.QueryTranslatorFactoryInitiator </span> : HHH000397: Using ASTQueryTranslatorFactory</div>
<div class="co" style="left:15.4px;top:20.18px">2022-06-28 22:17:39.783  <span class="i">INFO</span> <span class="m">12756</span> --- [  restartedMain] <span class="l">o.s.s.concurrent.ThreadPoolTaskExecutor </span> : Initializing ExecutorService 'applicationTaskExecutor'</div>
<div class="co" style="left:15.4px;top:41.43px">2022-06-28 22:17:39.832  <span class="w">WARN</span> <span class="m">12756</span> --- [  restartedMain] <span class="l">aWebConfiguration$JpaWebMvcConfiguration</span> : spring.jpa.open-in-view is enabled by default. Therefore, database queries may be performed during</div>
<div class="co" style="left:15.4px;top:62.68px"> view rendering. Explicitly configure spring.jpa.open-in-view to disable this warning</div>
<div class="co" style="left:15.4px;top:83.93px">2022-06-28 22:17:40.084  <span class="i">INFO</span> <span class="m">12756</span> --- [  restartedMain] <span class="l">o.s.s.c.ThreadPoolTaskScheduler         </span> : Initializing ExecutorService 'taskScheduler'</div>
<div class="co" style="left:15.4px;top:105.18px">2022-06-28 22:17:40.504  <span class="i">INFO</span> <span class="m">12756</span> --- [  restartedMain] <span class="l">o.s.b.w.embedded.tomcat.TomcatWebServer </span> : Tomcat started on port(s): 8081 (http) with context path ''</div>
<div class="co" style="left:15.4px;top:126.43px">2022-06-28 22:17:40.508  <span class="i">INFO</span> <span class="m">12756</span> --- [  restartedMain] <span class="l">com.yuanlrc.base.App                    </span> : Started App in 8.154 seconds (JVM running for 11.231)</div>
<div class="co" style="left:15.4px;top:147.68px">Hibernate: select orderauth0_.id as id1_15_, orderauth0_.create_time as create_t2_15_, orderauth0_.update_time as update_t3_15_, orderauth0_.mac as mac4_15_, orderauth0_.order_sn as order_sn5_15_,</div>
<div class="co" style="left:15.4px;top:168.93px"> orderauth0_.phone as phone6_15_ from order_auth orderauth0_ order by orderauth0_.create_time desc</div>
</div>
<div style="left:107px;top:898px;width:1709px;height:9.6px;background:#4d4f51;"></div>
<div style="left:1872.4px;top:864px;width:7.6px;height:45px;background:#4d4f51;"></div>
<div style="left:0px;top:909px;width:1880px;height:29px;background:#3c3f41;"></div>
<div style="left:0px;top:909px;width:1880px;height:1px;background:#323435;"></div>
<div style="left:17.4px;top:910px;width:88.4px;height:27.5px;background:#2d2f30;"></div>
<svg style="left:32.5px;top:918.5px;" width="15" height="15" viewBox="0 0 15 15"><path d="M0.6,0.6 L10.8,6.9 L0.6,13.2 Z" fill="#afb1b3"/><circle cx="12" cy="12.2" r="2.6" fill="#2d2f30"/><circle cx="12" cy="12.2" r="2" fill="#2fe02f"/></svg>
<span class="t" style="left:52.2px;top:920.03px;font-size:13.2px;line-height:13.2px;letter-spacing:0.428px;color:#c4c4c4;">4: Run</span>
<div style="left:52.4px;top:933.2px;width:7.6px;height:1px;background:#c4c4c4;"></div>
<svg style="left:121.5px;top:918.5px;" width="14" height="12" viewBox="0 0 14 12"><g fill="#afb1b3"><rect x="0" y="0.6" width="2.4" height="2.4"/><rect x="4" y="0.6" width="9.6" height="2.4"/><rect x="0" y="4.8" width="2.4" height="2.4"/><rect x="4" y="4.8" width="9.6" height="2.4"/><rect x="0" y="9" width="2.4" height="2.4"/><rect x="4" y="9" width="9.6" height="2.4"/></g></svg>
<span class="t" style="left:141.2px;top:920.03px;font-size:13.2px;line-height:13.2px;letter-spacing:0.586px;">6: TODO</span>
<div style="left:141.4px;top:933.2px;width:7.6px;height:1px;background:#bbbbbb;"></div>
<svg style="left:221.5px;top:917px;" width="17" height="15" viewBox="0 0 17 15"><path d="M0.6,9.8 C-0.4,5 3.6,2.2 8.6,2.4 C11.6,2.6 14,1.6 15.6,0.2 C16.8,4.8 16,8.6 13,10.8 C9.8,13 5,12.8 2.6,11.2 L1,13.4 Z" fill="#afb1b3"/></svg>
<span class="t" style="left:244.4px;top:920.03px;font-size:13.2px;line-height:13.2px;letter-spacing:0.895px;">Spring</span>
<svg style="left:314.5px;top:917.5px;" width="15" height="14" viewBox="0 0 15 14"><rect x="0" y="0" width="14.4" height="13" fill="#afb1b3"/><path d="M2.6,3 L6,6 L2.6,9 M7,10 H11.6" stroke="#3c3f41" stroke-width="1.5" fill="none"/></svg>
<span class="t" style="left:335.2px;top:920.03px;font-size:13.2px;line-height:13.2px;letter-spacing:1.194px;">Terminal</span>
<svg style="left:422px;top:919px;" width="15" height="11" viewBox="0 0 15 11"><g fill="#afb1b3"><rect x="0" y="0" width="14.4" height="2.3"/><rect x="0" y="4" width="9.6" height="2.3"/><rect x="0" y="8" width="11.6" height="2.3"/></g></svg>
<span class="t" style="left:442.2px;top:920.03px;font-size:13.2px;line-height:13.2px;letter-spacing:0.542px;">0: Messages</span>
<div style="left:442.4px;top:933.2px;width:7.6px;height:1px;background:#bbbbbb;"></div>
<svg style="left:552.5px;top:917.5px;" width="16" height="16" viewBox="0 0 16 16"><rect x="0.8" y="0.8" width="11.4" height="11" fill="none" stroke="#afb1b3" stroke-width="1.6"/><rect x="0" y="0" width="13" height="3.4" fill="#afb1b3"/><rect x="5" y="6" width="10.6" height="9.4" fill="#afb1b3" stroke="#3c3f41" stroke-width="1"/><path d="M7.4,8.4 V13 M7.4,8.6 H9.6 M7.4,10.6 H9.2 M7.4,12.8 H9.6 M11.4,8.4 V13 M11.4,8.6 H13.6 M11.4,10.6 H13.2 M11.4,12.8 H13.6" stroke="#3c3f41" stroke-width="0.9" fill="none"/></svg>
<span class="t" style="left:574.2px;top:920.03px;font-size:13.2px;line-height:13.2px;letter-spacing:0.527px;">Java Enterprise</span>
<svg style="left:1780.9px;top:916.5px;" width="18" height="16" viewBox="0 0 18 16"><path d="M8.6,0.9 A7,7 0 1 0 8.6,14.9 H15.6 V7.9 A7,7 0 0 0 8.6,0.9 Z" fill="none" stroke="#afb1b3" stroke-width="1.7"/></svg>
<span class="t" style="left:1804.8px;top:920.43px;font-size:13.2px;line-height:13.2px;letter-spacing:0.601px;">Event Log</span>
<div style="left:0px;top:938px;width:1880px;height:25.5px;background:#3c3f41;"></div>
<div style="left:0px;top:937.5px;width:1880px;height:1px;background:#34373a;"></div>
<svg style="left:3px;top:944.5px;" width="17" height="16" viewBox="0 0 17 16"><rect x="3.6" y="0.8" width="11.4" height="10.8" fill="none" stroke="#afb1b3" stroke-width="1.5"/><path d="M1,4 V14.4 H12" stroke="#afb1b3" stroke-width="1.5" fill="none"/></svg>
<span class="t" style="left:30.4px;top:943.88px;font-size:15.5px;line-height:15.5px;letter-spacing:0.378px;">Compilation completed successfully in 14 s 971 ms (moments ago)</span>
<span class="t" style="left:1597.9px;top:943.88px;font-size:15.5px;line-height:15.5px;letter-spacing:-0.091px;">37:8</span>
<span class="t" style="left:1642.4px;top:943.88px;font-size:15.5px;line-height:15.5px;letter-spacing:-1.561px;">CRLF</span>
<svg style="left:1683.4px;top:945.6px;" width="7" height="13" viewBox="0 0 7 13"><path d="M0.4,5.6 L3.4,1.8 L6.4,5.6 Z M0.4,8.4 L3.4,12.2 L6.4,8.4 Z" fill="#afb1b3"/></svg>
<span class="t" style="left:1707.4px;top:943.88px;font-size:15.5px;line-height:15.5px;letter-spacing:-0.330px;color:#878a8c;">UTF-8</span>
<span class="t" style="left:1764px;top:943.88px;font-size:15.5px;line-height:15.5px;letter-spacing:-0.064px;">4 spaces</span>
<svg style="left:1832.8px;top:945.6px;" width="7" height="13" viewBox="0 0 7 13"><path d="M0.4,5.6 L3.4,1.8 L6.4,5.6 Z M0.4,8.4 L3.4,12.2 L6.4,8.4 Z" fill="#afb1b3"/></svg>
<div style="left:1849px;top:937.5px;width:31px;height:26.5px;background:#ffffff;"></div>
<div style="left:1854.2px;top:939.6px;width:2px;height:2.2px;background:#c6c6c6;"></div>
<div style="left:1854.2px;top:943.7px;width:2px;height:2.2px;background:#c6c6c6;"></div>
<div style="left:1854.2px;top:947.8000000000001px;width:2px;height:2.2px;background:#c6c6c6;"></div>
<div style="left:1854.2px;top:951.9px;width:2px;height:2.2px;background:#c6c6c6;"></div>
<div style="left:1854.2px;top:956.0px;width:2px;height:2.2px;background:#c6c6c6;"></div>
<div style="left:1854.2px;top:960.1px;width:2px;height:2.2px;background:#c6c6c6;"></div>
<svg style="left:1862px;top:940px;" width="18" height="22" viewBox="0 0 18 22"><g transform="rotate(-9 10 11)"><rect x="2.4" y="1" width="26" height="20" rx="3" fill="#f05a22"/><path d="M16.5,5.2 H9.4 Q6.6,5.2 6.6,8 Q6.6,10.8 9.4,10.8 H14 Q16.8,10.8 16.8,13.8 Q16.8,16.6 14,16.6 H6" stroke="#fff" stroke-width="2.8" fill="none"/></g></svg>
<div style="left:0px;top:963.5px;width:1880px;height:44.5px;background:#cbe6ec;"></div>
<div style="left:0px;top:963.5px;width:1880px;height:1px;background:#b9d6dd;"></div>
<svg style="left:16px;top:978px;" width="30" height="26" viewBox="0 0 30 26"><defs><mask id="mm"><rect width="30" height="26" fill="#fff"/><circle cx="5.4" cy="6.2" r="6.3" fill="#000"/></mask><linearGradient id="cg" x1="0" y1="0" x2="0" y2="1"><stop offset="0" stop-color="#f2f6fb"/><stop offset="1" stop-color="#c9d8e8"/></linearGradient></defs><circle cx="8.7" cy="9.2" r="7.4" fill="#f5b82a" mask="url(#mm)"/><path d="M5.4,22.6 Q2.4,22.6 2.4,19.8 Q2.4,17 5.6,16.8 Q6.4,12.4 11,12.4 Q14.4,12.4 16,15 Q17,14.4 18.6,14.4 Q22,14.6 22.6,17.6 Q26.4,17.6 26.4,20.2 Q26.4,22.6 23.6,22.6 Z" fill="url(#cg)"/></svg>
<span class="t" style="left:57px;top:977.53px;font-size:14.5px;line-height:14.5px;letter-spacing:-0.669px;color:#1b1b1b;">29°C</span>
<span class="t" style="left:57px;top:996.75px;font-size:14px;line-height:14px;color:#555a5e;">多云</span>
<svg style="left:606.8px;top:980.4px;" width="30" height="28" viewBox="0 0 30 28"><defs><linearGradient id="wg" x1="0" y1="0" x2="1" y2="1"><stop offset="0" stop-color="#35c1f6"/><stop offset="1" stop-color="#0b78d6"/></linearGradient></defs><rect x="0" y="0" width="14" height="13.6" rx="1" fill="url(#wg)"/><rect x="15.4" y="0" width="14" height="13.6" rx="1" fill="url(#wg)"/><rect x="0" y="15" width="14" height="13.6" fill="url(#wg)"/><rect x="15.4" y="15" width="14" height="13.6" fill="url(#wg)"/></svg>
<svg style="left:662px;top:980px;" width="30" height="28" viewBox="0 0 30 28"><circle cx="16.6" cy="11.4" r="9.6" fill="none" stroke="#16181a" stroke-width="3.2"/><path d="M9.6,18.6 L2.6,26.4" stroke="#16181a" stroke-width="3.8" stroke-linecap="round"/></svg>
<svg style="left:716px;top:979px;" width="31" height="29" viewBox="0 0 31 29"><rect x="10.6" y="1" width="19.4" height="18" rx="2" fill="#f4f6f8"/><rect x="1" y="9.6" width="20.6" height="20" rx="2" fill="#2a2c2e"/><rect x="10.6" y="9.6" width="11" height="9.4" fill="#a9acae"/></svg>
<svg style="left:772px;top:978px;" width="32" height="30" viewBox="0 0 32 30"><path d="M3,2 L23,5.4 L21,22 L1,17.4 Z" fill="#2333c9"/><path d="M5,3.4 L13,4.8 L9.6,17.6 L2.6,16 Z" fill="#4a63ee"/><path d="M8,19 L20,21.8 L18,27 L8,25 Z" fill="#c9ccd2"/><circle cx="23.6" cy="24.4" r="6" fill="#d8dde2"/><path d="M20.6,21.6 L23.6,24.4 L20.6,27.2 M26.6,21.6 L23.8,24.4 L26.6,27.2" stroke="#3a9a4a" stroke-width="1.6" fill="none"/></svg>
<svg style="left:826px;top:978px;" width="33" height="30" viewBox="0 0 33 30"><defs><linearGradient id="eg" x1="0" y1="0" x2="1" y2="0.6"><stop offset="0" stop-color="#1b6fd6"/><stop offset="0.6" stop-color="#2fb5e6"/><stop offset="1" stop-color="#5fd66a"/></linearGradient></defs><circle cx="16.4" cy="16.4" r="15.6" fill="url(#eg)"/><path d="M8.4,20 C8.4,13.6 14,10.6 19.6,11.6 C24,12.4 26.4,15.4 26.6,18 C23.6,15.6 17.4,15.4 15.4,19.6 C13.6,23.8 16.4,28.6 21.4,30 L8,30 Z" fill="#cbe6ec"/><path d="M2,14 C6,6 20,5.6 26.6,18 C22,13.2 12.4,13 8.4,20 C7,24 8.6,28.6 12,30.6 C3.6,28 -0.6,20.6 2,14 Z" fill="#1565c9"/></svg>
<svg style="left:881px;top:978px;" width="32" height="30" viewBox="0 0 32 30"><circle cx="16" cy="16" r="15" fill="none" stroke="#f5c21b" stroke-width="3.4"/><path d="M1.6,18 A14.6,14.6 0 0 1 12,1.8" stroke="#e84a3a" stroke-width="3.4" fill="none"/><path d="M20,1.8 A14.6,14.6 0 0 1 30.6,18" stroke="#8c4ad6" stroke-width="3.4" fill="none"/><path d="M1.6,18 A14.6,14.6 0 0 0 8,28.4" stroke="#3bb54a" stroke-width="3.4" fill="none"/><circle cx="16" cy="16" r="11" fill="#2aa7ea"/><path d="M9.6,16.6 H22.6 C22.6,8.4 9.6,8.4 9.6,16.6 C9.6,25 19.6,25.4 22.4,21" stroke="#fff" stroke-width="3" fill="none"/></svg>
<svg style="left:937px;top:978px;" width="30" height="30" viewBox="0 0 30 30"><circle cx="14.6" cy="14.6" r="14" fill="#e8453c"/><path d="M14.6,14.6 L2.5,7.6 A14,14 0 0 0 7.6,26.7 Z" fill="#34a853"/><path d="M14.6,14.6 L7.6,26.7 A14,14 0 0 0 28.6,14.6 Z" fill="#fbbc05"/><path d="M14.6,14.6 L28.6,14.6 A14,14 0 0 0 26.7,7.6 Z" fill="#e8453c"/><circle cx="14.6" cy="14.6" r="6.6" fill="#fff"/><circle cx="14.6" cy="14.6" r="5.2" fill="#4285f4"/></svg>
<svg style="left:991px;top:978px;" width="32" height="30" viewBox="0 0 32 30"><path d="M1,4 Q1,2 3,2 H11 L14,5.4 H29 Q31,5.4 31,7.4 V30 H1 Z" fill="#f2b21c"/><rect x="1" y="9" width="30" height="21" rx="1.6" fill="#fbd04a"/><rect x="6.6" y="20.6" width="19" height="9.4" rx="1.6" fill="#1f7fdc"/><rect x="10" y="24" width="12" height="2.2" fill="#0d5cad"/></svg>
<svg style="left:1048px;top:980px;" width="27" height="28" viewBox="0 0 27 28"><rect x="0.6" y="0.6" width="26" height="27" rx="3" fill="#f1ece6"/><circle cx="10" cy="17" r="5.6" fill="#f07c2a"/><circle cx="10" cy="17" r="2.2" fill="#fbd3b0"/><rect x="18" y="8" width="5" height="15" fill="#f07c2a"/><circle cx="14.6" cy="7" r="1.6" fill="#f07c2a"/></svg>
<svg style="left:1102px;top:979px;" width="29" height="29" viewBox="0 0 29 29"><rect x="0" y="0" width="29" height="29" rx="3" fill="#2f7de0"/><path d="M0,22 L10,10 L20,22 L29,14 V29 H0 Z" fill="#1b3f8f"/><path d="M13,29 L22,17 L29,24 V29 Z" fill="#4a6fd0"/><circle cx="19" cy="7" r="2.6" fill="#fff"/></svg>
<svg style="left:1157px;top:980px;" width="30" height="28" viewBox="0 0 30 28"><g fill="#e9c75b"><ellipse cx="13" cy="15" rx="12" ry="10"/><ellipse cx="14" cy="5" rx="6" ry="4.6"/><ellipse cx="25" cy="9" rx="4.6" ry="6" transform="rotate(30 25 9)"/><ellipse cx="21" cy="22" rx="7" ry="5"/></g></svg>
<svg style="left:1217px;top:978px;" width="22" height="30" viewBox="0 0 22 30"><rect x="0.6" y="3" width="20.4" height="27" rx="1.6" fill="#35a5e8"/><rect x="0.6" y="25.4" width="20.4" height="4.6" fill="#8b5a3c"/><g fill="#0d5a9a"><circle cx="4" cy="3.4" r="1.5"/><circle cx="8.6" cy="3.4" r="1.5"/><circle cx="13.2" cy="3.4" r="1.5"/><circle cx="17.8" cy="3.4" r="1.5"/></g><g stroke="#0d5a9a" stroke-width="1.7"><path d="M4,10 H18 M4,14 H18 M4,18 H18 M4,22 H18"/></g></svg>
<div style="left:1258px;top:972.5px;width:47px;height:40px;background:#e2eff3;border-radius:4px"></div>
<svg style="left:1267px;top:978px;" width="30" height="30" viewBox="0 0 30 30"><path d="M2,6 L14,0 L22,10 L10,24 Z" fill="#fc3f6c"/><path d="M14,0 L29,8 L26,24 L14,26 Z" fill="#2a7cf0"/><path d="M20,6 L29,16 L22,29 L12,24 Z" fill="#7b3fe0"/><rect x="5.4" y="5.6" width="18.6" height="18.6" fill="#0d0d0d"/><path d="M8.4,8.6 H13 M10.7,8.6 V14.4 M8.4,14.4 H13 M15,8.6 H18.4 M17.4,8.6 V13 Q17.4,14.4 15.6,14.4 H14.6" stroke="#fff" stroke-width="1.5" fill="none"/><rect x="7.6" y="20" width="7" height="1.4" fill="#fff"/></svg>
<svg style="left:1579px;top:989.5px;" width="18" height="10" viewBox="0 0 18 10"><path d="M1,9 L8.8,1.2 L16.6,9" stroke="#1b1b1b" stroke-width="1.5" fill="none"/></svg>
<div style="left:1608.2px;top:984.3px;width:20px;height:21px;background:#f4f8fa;border-radius:3px"></div>
<svg style="left:1610px;top:988px;" width="17" height="14" viewBox="0 0 17 14"><circle cx="8.4" cy="4.6" r="3.4" fill="none" stroke="#e8556a" stroke-width="1.7"/><circle cx="4.6" cy="9.4" r="3.4" fill="none" stroke="#2f9af0" stroke-width="1.7"/><circle cx="12.2" cy="9.4" r="3.4" fill="none" stroke="#2f9af0" stroke-width="1.7"/></svg>
<div style="left:1614px;top:1005.4px;width:8px;height:2.6px;background:#e8556a;"></div>
<svg style="left:1645px;top:984px;" width="16" height="21" viewBox="0 0 16 21"><rect x="4.8" y="0.8" width="6.4" height="11.6" rx="3.2" fill="none" stroke="#3a4a52" stroke-width="1.4"/><path d="M1.2,9 Q1.2,15.6 8,15.6 Q14.8,15.6 14.8,9 M8,15.6 V20" stroke="#3a4a52" stroke-width="1.4" fill="none"/></svg>
<svg style="left:1682px;top:985px;" width="22" height="16" viewBox="0 0 22 16"><g fill="none" stroke="#1b1b1b" stroke-width="1.5"><path d="M1,5.6 Q11,-3.4 21,5.6"/><path d="M4.4,9 Q11,3 17.6,9"/><path d="M7.6,12 Q11,9 14.4,12"/></g><circle cx="11" cy="14.4" r="1.4" fill="#1b1b1b"/></svg>
<svg style="left:1712px;top:985px;" width="22" height="17" viewBox="0 0 22 17"><path d="M1,5.6 H4.6 L9,1.4 V15.4 L4.6,11.4 H1 Z" fill="none" stroke="#1b1b1b" stroke-width="1.4"/><g fill="none" stroke="#1b1b1b" stroke-width="1.4"><path d="M11.6,5.6 Q13.6,8.4 11.6,11.2"/><path d="M14.4,3.4 Q17.8,8.4 14.4,13.4"/><path d="M17.2,1.2 Q22,8.4 17.2,15.6"/></g></svg>
<svg style="left:1742px;top:986px;" width="22" height="15" viewBox="0 0 22 15"><rect x="4.6" y="3" width="14" height="9.6" rx="1.6" fill="none" stroke="#1b1b1b" stroke-width="1.5"/><rect x="6.4" y="4.8" width="9" height="6" fill="#1b1b1b"/><rect x="19.4" y="5.8" width="2" height="4" fill="#1b1b1b"/><path d="M1,3.4 H5.6 V8.4 H1 Z M2.4,0.6 V3.4 M4.4,0.6 V3.4 M3.4,8.4 V12.6 H6" stroke="#1b1b1b" stroke-width="1.3" fill="#1b1b1b"/></svg>
<span class="t" style="left:1818.8px;top:977.33px;font-size:14.5px;line-height:14.5px;letter-spacing:-1.074px;color:#1b1b1b;">22:17</span>
<span class="t" style="left:1783.2px;top:995.93px;font-size:14.5px;line-height:14.5px;letter-spacing:0.386px;color:#1b1b1b;">2022/6/28</span>
<div style="left:1865.5px;top:984.6px;width:20px;height:20px;border-radius:10px;background:#4f8f96"></div>
<span class="t" style="left:1872.2px;top:987.97px;font-size:13.5px;line-height:13.5px;font-weight:700;color:#ffffff;">1</span>
<div style="left:1778px;top:456.3px;width:110px;height:31.3px;border-radius:5px;background:linear-gradient(#dff0fd,#b9e0fb);overflow:hidden"><div style="left:0;top:0;width:38px;height:31.3px;background:#2a9ff6"></div></div>
<svg style="left:1785px;top:460.5px;" width="26" height="21" viewBox="0 0 26 21"><g fill="none" stroke="#ffffff" stroke-width="2.7"><circle cx="12.6" cy="6.8" r="4.7"/><circle cx="6.4" cy="14" r="4.7"/><circle cx="18.8" cy="14" r="4.7"/></g></svg>
<span class="t" style="left:1832.6px;top:465.10px;font-size:15px;line-height:15px;color:#5cadee;">拖拽上传</span>
<div style="left:1646px;top:590.8px;width:230.8px;height:29.4px;background:#ffffff;"></div>
<svg style="left:1619px;top:585px;" width="40" height="39" viewBox="0 0 40 39"><g transform="rotate(-11 20 20)"><rect x="3.6" y="4.6" width="33" height="30" rx="4.6" fill="#f05a22"/><path d="M29.4,11.6 H16 Q11.4,11.6 11.4,15.6 Q11.4,19.6 16,19.6 H24 Q28.8,19.6 28.8,23.8 Q28.8,28 24,28 H9.6" stroke="#ffffff" stroke-width="4.4" fill="none"/></g></svg>
<svg style="left:1663px;top:597.4px;" width="19" height="19" viewBox="0 0 19 19"><rect x="1.4" y="4.2" width="15.6" height="8.4" fill="none" stroke="#1f6fc6" stroke-width="2.7"/><path d="M9.2,0 V18.6" stroke="#1f6fc6" stroke-width="2.9"/></svg>
<svg style="left:1692px;top:601px;" width="17" height="15" viewBox="0 0 17 15"><circle cx="3.4" cy="3.6" r="2.3" fill="none" stroke="#1f6fc6" stroke-width="1.6"/><path d="M11,7.4 H14.6 V10.6 Q14.6,13.4 11.4,14.4 V12.8 Q12.8,12.2 12.8,10.8 H11 Z" fill="#1f6fc6"/></svg>
<svg style="left:1715.6px;top:596.6px;" width="22" height="22" viewBox="0 0 22 22"><circle cx="10.9" cy="10.9" r="9.4" fill="none" stroke="#1f6fc6" stroke-width="2.2"/><rect x="6.8" y="5.6" width="2.2" height="4.6" rx="1" fill="#1f6fc6"/><rect x="12.8" y="5.6" width="2.2" height="4.6" rx="1" fill="#1f6fc6"/><path d="M5.6,12.4 Q10.9,18.8 16.2,12.4" stroke="#1f6fc6" stroke-width="2" fill="none"/></svg>
<svg style="left:1746px;top:596.6px;" width="17" height="21" viewBox="0 0 17 21"><rect x="4.6" y="0.2" width="7" height="12.4" rx="3.5" fill="#1f6fc6"/><path d="M1.2,8.6 Q1.2,15.4 8.1,15.4 Q15,15.4 15,8.6 M8.1,15.4 V19" stroke="#1f6fc6" stroke-width="1.9" fill="none"/><rect x="4" y="18.2" width="8.2" height="1.9" fill="#1f6fc6"/></svg>
<svg style="left:1770.6px;top:598.4px;" width="22" height="17" viewBox="0 0 22 17"><rect x="1" y="1" width="19.4" height="14.4" rx="2" fill="#1f6fc6"/><g fill="#ffffff"><rect x="3.4" y="3.6" width="2" height="2"/><rect x="6.8" y="3.6" width="2" height="2"/><rect x="10.2" y="3.6" width="2" height="2"/><rect x="13.6" y="3.6" width="2" height="2"/><rect x="17" y="3.6" width="1.6" height="2"/><rect x="3.4" y="7" width="2" height="2"/><rect x="6.8" y="7" width="2" height="2"/><rect x="10.2" y="7" width="2" height="2"/><rect x="13.6" y="7" width="2" height="2"/><rect x="17" y="7" width="1.6" height="2"/><rect x="5" y="11" width="11.6" height="2"/></g></svg>
<svg style="left:1799px;top:597.6px;" width="23" height="19" viewBox="0 0 23 19"><circle cx="8.4" cy="4.2" r="3.6" fill="#b9bec4"/><path d="M1.6,17.6 Q1.6,9 8.4,9 Q15.2,9 15.2,17.6 Z" fill="#b9bec4"/><rect x="8" y="10.6" width="14" height="7.6" fill="#e8eaec"/><path d="M9.4,12 H13.6 V14.4 H9.4 V16.8 H13.8 M16,12 H20.4 V16.8 H16 Z" stroke="#ffffff" stroke-width="1.3" fill="none"/></svg>
<svg style="left:1826px;top:597.4px;" width="19" height="19" viewBox="0 0 19 19"><path d="M6,0.6 Q9.2,3.4 12.4,0.6 L18,4 L15.6,8.4 L13.8,7.4 V18 H4.6 V7.4 L2.8,8.4 L0.4,4 Z" fill="#1f6fc6"/></svg>
<svg style="left:1853.8px;top:597.6px;" width="17" height="18" viewBox="0 0 17 18"><g fill="#1f6fc6"><rect x="0.2" y="0.4" width="7" height="7.4"/><rect x="0.2" y="9.8" width="7" height="7.4"/><rect x="9.2" y="9.8" width="7" height="7.4"/></g><rect x="10.2" y="1.4" width="5" height="5.4" fill="none" stroke="#1f6fc6" stroke-width="2"/></svg>
<svg style="left:242.7px;top:352.1px;" width="15" height="22" viewBox="0 0 15 22"><path transform="scale(0.94)" d="M1.2,1.4 V17.4 L5,13.8 L8,20.4 L10.6,19.2 L7.6,12.8 H12.6 Z" fill="#ffffff" stroke="#111111" stroke-width="1.1" stroke-linejoin="round"/></svg>
<span class="t" style="left:0px;top:-0.00px;font-size:13px;line-height:13px;letter-spacing:0.516px;transform-origin:0 0;transform:translate(0.3px,676.4px) rotate(-90deg);">Z: Structure</span>
<div style="left:12.3px;top:669.1999999999999px;width:1.1px;height:6.8px;background:#bbbbbb;"></div>
<svg style="left:0px;top:683.5px;" width="13" height="11" viewBox="0 0 13 11"><g fill="#afb1b3"><rect x="-2" y="6" width="4.6" height="4.6"/><rect x="3.8" y="6" width="4.6" height="4.6"/><rect x="3.8" y="0.2" width="4.6" height="4.6"/><rect x="-2" y="0.2" width="0" height="0"/></g><rect x="7" y="0.6" width="4.2" height="4.2" fill="#afb1b3" opacity="0"/></svg>
<span class="t" style="left:0px;top:-0.00px;font-size:13px;line-height:13px;letter-spacing:0.189px;transform-origin:0 0;transform:translate(0.3px,798.2px) rotate(-90deg);">2: Favorites</span>
<div style="left:12.3px;top:791.0px;width:1.1px;height:6.8px;background:#bbbbbb;"></div>
<svg style="left:0px;top:804px;" width="13" height="14" viewBox="0 0 13 14"><path d="M5.4,0.4 L7.5,5 L12.5,5.5 L8.8,8.9 L9.9,13.8 L5.4,11.3 L0.9,13.8 L2,8.9 L-1.7,5.5 L3.3,5 Z" fill="#afb1b3"/></svg>
<span class="t" style="left:0px;top:-0.00px;font-size:13px;line-height:13px;letter-spacing:0.250px;transform-origin:0 0;transform:translate(0.3px,875.8px) rotate(-90deg);">Web</span>
<svg style="left:0px;top:880.2px;" width="13" height="17" viewBox="0 0 13 17"><circle cx="4.6" cy="8" r="7.3" fill="none" stroke="#afb1b3" stroke-width="1.5"/><path d="M-1,3.6 Q3,4.6 5.6,2.4 Q7.6,4.8 5,7 Q2,7.6 2.6,10.4 Q5.6,11 5,15" stroke="#afb1b3" stroke-width="1.6" fill="none"/></svg>
</body></html>
